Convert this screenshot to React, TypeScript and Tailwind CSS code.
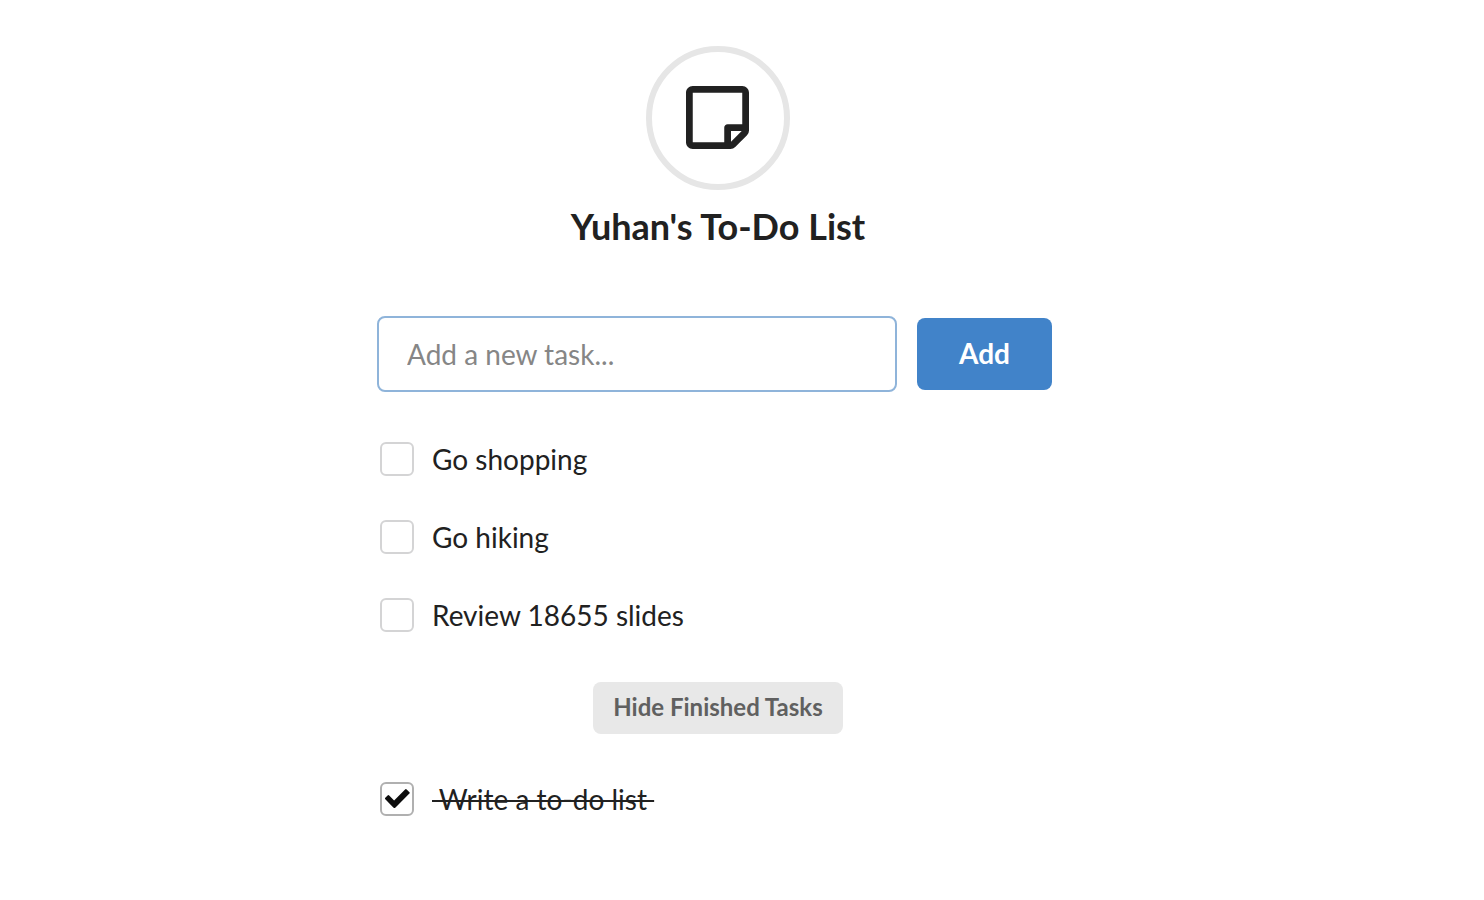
import { useState, type FormEvent } from 'react'

type Task = { id: number; title: string; done: boolean }

const initialTasks: Task[] = [
  { id: 1, title: 'Go shopping', done: false },
  { id: 2, title: 'Go hiking', done: false },
  { id: 3, title: 'Review 18655 slides', done: false },
  { id: 4, title: 'Write a to-do list', done: true },
]

function NoteIcon() {
  return (
    <svg viewBox="0 32 448 448" className="size-[63px]" fill="currentColor" aria-hidden="true">
      <path d="M448 348.106V80c0-26.51-21.49-48-48-48H48C21.49 32 0 53.49 0 80v351.988c0 26.51 21.49 48 48 48h268.118a48 48 0 0 0 33.941-14.059l83.882-83.882A48 48 0 0 0 448 348.106zm-128 80v-76.118h76.118L320 428.106zM400 80v223.988H296c-13.255 0-24 10.745-24 24v104H48V80h352z" />
    </svg>
  )
}

function CheckIcon() {
  return (
    <svg
      viewBox="121 298 1550 1196"
      className="pointer-events-none col-start-1 row-start-1 mb-0.5 h-5 w-[26px] text-[#0d0d0d]"
      fill="currentColor"
      aria-hidden="true"
    >
      <path d="M1671 566q0 28-20 48l-724 724-136 136q-20 20-48 20t-48-20l-136-136-362-362q-20-20-20-48t20-48l136-136q20-20 48-20t48 20l294 295 656-657q20-20 48-20t48 20l136 136q20 20 20 48z" />
    </svg>
  )
}

function TaskList({ tasks, onToggle }: { tasks: Task[]; onToggle: (id: number) => void }) {
  return (
    <ul className="flex flex-col gap-11 pl-[3px]">
      {tasks.map((task) => (
        <li key={task.id}>
          <label className="flex items-center gap-[18px] text-[28px] leading-[34px]">
            <span className="grid shrink-0 place-items-center">
              <input
                type="checkbox"
                checked={task.done}
                onChange={() => onToggle(task.id)}
                className="col-start-1 row-start-1 size-[34px] appearance-none rounded-md border-2 border-[#d4d4d5] bg-white checked:border-[#b0b0b0]"
              />
              {task.done && <CheckIcon />}
            </span>
            {task.done ? (
              <del className="whitespace-pre decoration-2">{` ${task.title} `}</del>
            ) : (
              <span>{task.title}</span>
            )}
          </label>
        </li>
      ))}
    </ul>
  )
}

export default function App() {
  const [tasks, setTasks] = useState(initialTasks)
  const [draft, setDraft] = useState('')
  const [showFinished, setShowFinished] = useState(true)

  const toggle = (id: number) =>
    setTasks((all) => all.map((t) => (t.id === id ? { ...t, done: !t.done } : t)))

  const addTask = (event: FormEvent) => {
    event.preventDefault()
    const title = draft.trim()
    if (!title) return
    setTasks((all) => [...all, { id: Date.now(), title, done: false }])
    setDraft('')
  }

  return (
    <div className="min-h-screen bg-white py-[46px] pr-12 font-['Lato',sans-serif] text-[#212121]">
      <main className="mx-auto flex max-w-[682px] flex-col">
        <header className="flex flex-col items-center">
          <div className="flex size-36 items-center justify-center rounded-full border-6 border-[#e6e6e6] pr-0.5 pb-0.5">
            <NoteIcon />
          </div>
          <h1 className="mt-3.5 text-4xl leading-[44px] font-bold">Yuhan's To-Do List</h1>
        </header>

        <form onSubmit={addTask} className="mt-[68px] mr-[7px] flex items-center gap-5">
          <input
            type="text"
            aria-label="New task"
            placeholder="Add a new task..."
            value={draft}
            onChange={(event) => setDraft(event.target.value)}
            className="h-[76px] min-w-0 flex-1 rounded-lg border-2 border-[#8fb4da] px-7 text-[28px] outline-none placeholder:text-[#868686]"
          />
          <button
            type="submit"
            className="h-[72px] rounded-lg bg-[#4183c9] px-[42px] pb-0.5 text-[28px] font-bold text-white"
          >
            Add
          </button>
        </form>

        <section className="mt-[50px]">
          <TaskList tasks={tasks.filter((t) => !t.done)} onToggle={toggle} />
        </section>

        <button
          type="button"
          onClick={() => setShowFinished((shown) => !shown)}
          className="mt-[50px] h-[52px] self-center rounded-lg bg-[#e8e8e8] px-5 pb-0.5 text-2xl font-bold text-[#606060]"
        >
          {showFinished ? 'Hide' : 'Show'} Finished Tasks
        </button>

        {showFinished && (
          <section className="mt-12">
            <TaskList tasks={tasks.filter((t) => t.done)} onToggle={toggle} />
          </section>
        )}
      </main>
    </div>
  )
}
